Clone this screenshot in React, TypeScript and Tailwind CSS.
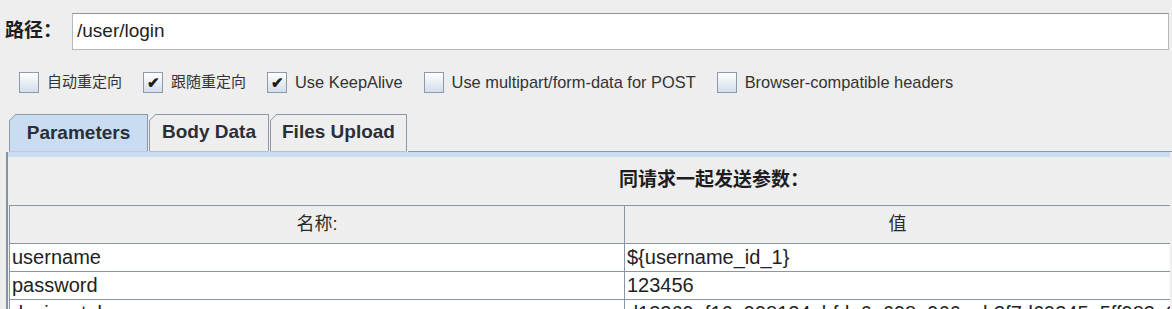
import React from "react";

const CJK = "font-['Liberation_Sans','Noto_Sans_CJK_SC',sans-serif]";

const OPTIONS = [
  { label: "自动重定向", checked: false },
  { label: "跟随重定向", checked: true },
  { label: "Use KeepAlive", checked: true },
  { label: "Use multipart/form-data for POST", checked: false },
  { label: "Browser-compatible headers", checked: false },
];

const TABS = [
  { label: "Parameters", width: "w-[139px]", active: true },
  { label: "Body Data", width: "w-[120px]", active: false },
  { label: "Files Upload", width: "w-[137px]", active: false },
];

const ROWS = [
  { name: "username", value: "${username_id_1}" },
  { name: "password", value: "123456" },
  { name: "device_token", value: "d13269af16a998124abfda6a698a966aab3f7d69345a5ff983a3f0" },
];

function Checkbox({ checked }: { checked: boolean }) {
  return (
    <span className="flex h-[21px] w-[20px] shrink-0 items-center justify-center border border-[#8c9aab] bg-gradient-to-b from-[#ffffff] to-[#d3dde9] text-[15px] font-bold leading-none text-[#1b1b1b]">
      {checked ? "✔" : ""}
    </span>
  );
}

function Tab({ label, width, active }: { label: string; width: string; active: boolean }) {
  return (
    <div className={`${width} h-[38px] bg-[#8d97a6] px-[1px] pt-[1px] [clip-path:polygon(7px_0,100%_0,100%_100%,0_100%,0_7px)]`}>
      <div
        className={`flex h-full items-center justify-center text-[19px] font-bold text-[#2a2f36] [clip-path:polygon(6px_0,100%_0,100%_100%,0_100%,0_6px)] ${
          active ? "bg-[#c9dcf2]" : "bg-[#eeeeee] border-b border-[#8d97a6]"
        }`}
      >
        {label}
      </div>
    </div>
  );
}

export default function App() {
  return (
    <div className={`h-[309px] w-[1172px] overflow-hidden bg-[#eeeeee] text-[#222] ${CJK}`}>
      {/* path row */}
      <div className="flex items-center pl-[5px] pr-[3px] pt-[13px]">
        <span className="w-[67px] text-[19px] font-bold text-[#1d1d1d]">路径：</span>
        <div className="flex h-[37px] flex-1 items-center border border-[#b4b9bf] border-t-[#8f959c] bg-white pl-[4px] text-[19px] text-[#222]">
          /user/login
        </div>
      </div>

      {/* options */}
      <div className="mt-[20px] flex items-center gap-[21px] pl-[19px]">
        {OPTIONS.map((o) => (
          <label key={o.label} className="flex items-center gap-[8px] text-[16.4px] text-[#333]">
            <Checkbox checked={o.checked} />
            <span className={/[a-z]/i.test(o.label) ? "" : "text-[15px]"}>{o.label}</span>
          </label>
        ))}
      </div>

      {/* tabs */}
      <div className="mt-[19px] flex items-end gap-[1px] pl-[9px]">
        {TABS.map((t) => (
          <Tab key={t.label} {...t} />
        ))}
        <div className="h-[1px] flex-1 bg-[#8d97a6]" />
      </div>

      {/* panel */}
      <div className="ml-[6px] mr-[2px] border-l-2 border-[#8593a8]">
        <div className="h-[5px] bg-[#c9dcf2]" />
        <div className="flex h-[48px] items-center justify-center pl-[250px] text-[19px] font-bold text-[#1d1d1d]">
          同请求一起发送参数：
        </div>
        <div className="ml-[1px] border-l border-t border-[#8a96a8]">
          <div className="grid h-[38px] grid-cols-[615px_1fr] border-b border-[#8a96a8] text-[18px] text-[#2a2a2a]">
            <div className="flex items-center justify-center border-r border-[#8a96a8]">名称:</div>
            <div className="flex items-center justify-center">值</div>
          </div>
          {ROWS.map((r) => (
            <div key={r.name} className="grid h-[28px] grid-cols-[615px_1fr] border-b border-[#8a96a8] bg-white text-[20px] leading-none text-[#222]">
              <div className="flex items-center overflow-hidden border-r border-[#8a96a8] pl-[2px]">{r.name}</div>
              <div className="flex items-center overflow-hidden whitespace-nowrap pl-[2px]">{r.value}</div>
            </div>
          ))}
        </div>
      </div>
    </div>
  );
}
